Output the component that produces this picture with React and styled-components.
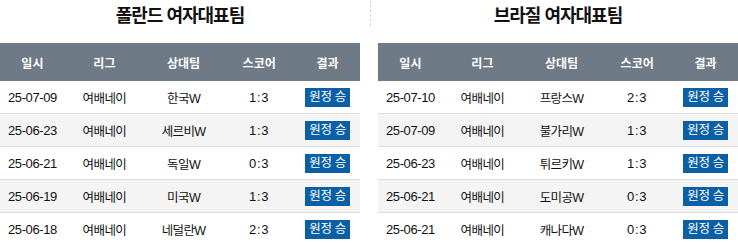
import React from "react";
import styled, { createGlobalStyle } from "styled-components";

const teams = [
  {
    title: "폴란드 여자대표팀",
    games: [
      ["25-07-09", "여배네이", "한국W", "1:3"],
      ["25-06-23", "여배네이", "세르비W", "1:3"],
      ["25-06-21", "여배네이", "독일W", "0:3"],
      ["25-06-19", "여배네이", "미국W", "1:3"],
      ["25-06-18", "여배네이", "네덜란W", "2:3"],
    ],
  },
  {
    title: "브라질 여자대표팀",
    games: [
      ["25-07-10", "여배네이", "프랑스W", "2:3"],
      ["25-07-09", "여배네이", "불가리W", "1:3"],
      ["25-06-23", "여배네이", "튀르키W", "1:3"],
      ["25-06-21", "여배네이", "도미공W", "0:3"],
      ["25-06-21", "여배네이", "캐나다W", "0:3"],
    ],
  },
];

const widths = ["18%", "22%", "22%", "20%", "18%"];
const heads = ["일시", "리그", "상대팀", "스코어", "결과"];

function App() {
  return (
    <>
      <GlobalStyle />
      <Page>
        {teams.map((team, i) => (
          <React.Fragment key={team.title}>
            {i > 0 && <Divider />}
            <Panel>
              <Title>{team.title}</Title>
              <Table>
                <colgroup>
                  {widths.map((w, k) => (
                    <col key={k} style={{ width: w }} />
                  ))}
                </colgroup>
                <thead>
                  <tr>
                    {heads.map((h) => (
                      <Th key={h}>{h}</Th>
                    ))}
                  </tr>
                </thead>
                <tbody>
                  {team.games.map((g, r) => (
                    <Row key={r} $odd={r % 2 === 1}>
                      <Td $kind="date">{g[0]}</Td>
                      <Td>{g[1]}</Td>
                      <Td>{g[2]}</Td>
                      <Td $kind="score">{g[3]}</Td>
                      <Td>
                        <Result>원정 승</Result>
                      </Td>
                    </Row>
                  ))}
                </tbody>
              </Table>
            </Panel>
          </React.Fragment>
        ))}
      </Page>
    </>
  );
}

export default App;

const GlobalStyle = createGlobalStyle`
  body {
    margin: 0;
    background: #fff;
    font-family: "Liberation Sans", "Noto Sans CJK KR", sans-serif;
    color: #111;
  }
`;

const Page = styled.div`
  display: flex;
  width: 738px;
  overflow: hidden;
`;

const Panel = styled.section`
  width: 360px;
  flex-shrink: 0;
`;

const Divider = styled.div`
  width: 18px;
  flex-shrink: 0;
  display: flex;
  justify-content: center;

  &::before {
    content: "";
    width: 0;
    height: 26px;
    margin-left: 2px;
    border-left: 1px dashed #d8d8d8;
  }
`;

const Title = styled.h2`
  margin: 0;
  height: 43px;
  line-height: 33px;
  text-align: center;
  font-size: 18px;
  font-weight: 700;
  letter-spacing: -1px;
  color: #111;
`;

const Table = styled.table`
  width: 100%;
  border-collapse: collapse;
  table-layout: fixed;
`;

const Th = styled.th`
  height: 38px;
  padding: 0;
  background: #6e7a86;
  color: #fff;
  font-weight: bold;
  font-size: 12px;
  text-align: center;
`;

const Row = styled.tr`
  background: ${(p) => (p.$odd ? "#f4f4f4" : "#fff")};
  border-bottom: 1px solid #ddd;
`;

const Td = styled.td`
  height: 32px;
  padding: 0;
  text-align: center;
  white-space: nowrap;
  font-size: ${(p) => (p.$kind ? "13px" : "12.5px")};
  letter-spacing: ${(p) =>
    p.$kind === "score" ? "0.8px" : p.$kind === "date" ? "-0.4px" : "-0.6px"};
`;

const Result = styled.span`
  display: inline-block;
  padding: 0 4px;
  height: 19px;
  line-height: 19px;
  font-size: 12.5px;
  background: #0b5fa5;
  color: #fff;
  letter-spacing: -0.3px;
`;
